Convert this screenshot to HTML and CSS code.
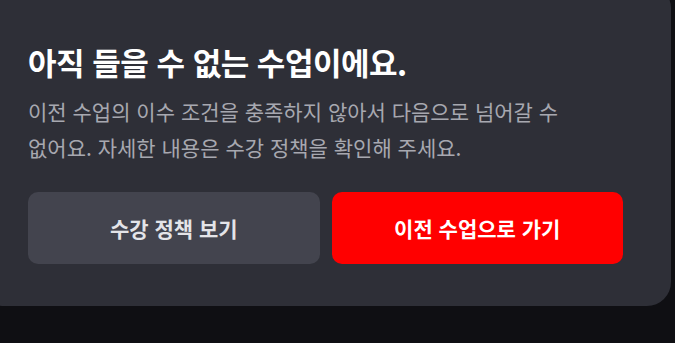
FILE: index.html
```html
<!DOCTYPE html>
<html lang="ko">
<head>
  <meta charset="UTF-8">
  <title>수강 안내</title>
  <link rel="stylesheet" href="styles.css">
</head>
<body>

  <div class="sheet">
    <h2 class="sheet-title">아직 들을 수 없는 수업이에요.</h2>
    <p class="sheet-desc">이전 수업의 이수 조건을 충족하지 않아서 다음으로 넘어갈 수 없어요. 자세한 내용은 수강 정책을 확인해 주세요.</p>

    <div class="sheet-actions">
      <button class="btn btn-secondary">수강 정책 보기</button>
      <button class="btn btn-primary">이전 수업으로 가기</button>
    </div>
  </div>

</body>
</html>
```

FILE: styles.css
```css
body {
  margin: 0;
  height: 343px;
  overflow: hidden;
  background: #0f0f13;
  font-family: "Noto Sans CJK KR", "Noto Sans", sans-serif;
}
.sheet {
  width: 595px;
  margin: -16px 0 0 -20px;
  padding: 58px 48px 42px 48px;
  background: #2e2f37;
  border-radius: 24px;
}
.sheet-title {
  margin: 0;
  font-size: 31px;
  line-height: 40px;
  font-weight: 700;
  color: #ffffff;
  letter-spacing: -0.5px;
}
.sheet-desc {
  margin: 11px 0 0 0;
  width: 540px;
  font-size: 21px;
  line-height: 36px;
  color: #a7a8b0;
}
.sheet-actions {
  display: flex;
  gap: 12px;
  margin-top: 27px;
}
.btn {
  flex: 1;
  height: 72px;
  border: none;
  border-radius: 10px;
  font-family: inherit;
  font-size: 21px;
  font-weight: 700;
  cursor: pointer;
}
.btn-secondary {
  background: #43444e;
  color: #e4e4e8;
}
.btn-primary {
  background: #ff0000;
  color: #ffffff;
}
```
